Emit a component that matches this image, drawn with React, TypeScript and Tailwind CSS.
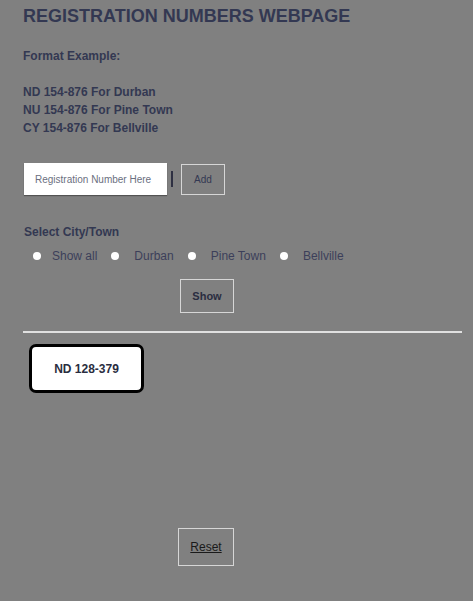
export default function App() {
  const cities = ["Show all", "Durban", "Pine Town", "Bellville"];

  return (
    <div className="min-h-[601px] w-full bg-[#808080] font-['Liberation_Sans',Arial,sans-serif] text-[#333852]">
      <div className="pl-[23px] pr-[11px] pt-[5px]">
        {/* Heading */}
        <h2 className="text-[18px] font-bold leading-[22px]">
          REGISTRATION NUMBERS WEBPAGE
        </h2>

        <p className="mt-[20px] text-[12px] font-bold leading-[18px]">Format Example:</p>

        <div className="mt-[18px] text-[12px] font-bold leading-[18px]">
          <p>ND 154-876 For Durban</p>
          <p>NU 154-876 For Pine Town</p>
          <p>CY 154-876 For Bellville</p>
        </div>

        {/* Add form */}
        <div className="mt-[26px] flex items-center">
          <input
            type="text"
            placeholder="Registration Number Here"
            className="ml-px h-[32px] w-[143px] bg-white px-[11px] text-[10px] text-[#333] placeholder:text-[#6b6f80] outline-none shadow-[0_1px_1px_rgba(0,0,0,0.35)]"
          />
          <span className="ml-[4px] h-[16px] w-[2px] bg-[#2e3042]"></span>
          <button className="ml-[8px] h-[31px] w-[44px] border border-[#d6d6d6] text-[10px] text-[#333852]">
            Add
          </button>
        </div>

        {/* City filter */}
        <p className="ml-px mt-[29px] text-[12px] font-bold leading-[16px]">Select City/Town</p>
        <div className="mt-[7px] flex items-center text-[12px] text-[#3c3f5a]">
          <label className="ml-[10px] flex items-center">
            <span className="h-[8px] w-[8px] rounded-full bg-white"></span>
            <span className="ml-[11px]">{cities[0]}</span>
          </label>
          {cities.slice(1).map((c) => (
            <label key={c} className="ml-[14px] flex items-center">
              <span className="h-[8px] w-[8px] rounded-full bg-white"></span>
              <span className="ml-[15px]">{c}</span>
            </label>
          ))}
        </div>

        <div className="mt-[14px] flex">
          <button className="ml-[157px] h-[34px] w-[54px] border border-[#d6d6d6] text-[11px] font-bold text-[#2a2d40]">
            Show
          </button>
        </div>

        <hr className="mt-[18px] border-t-[2px] border-[#e0e0e0]" />

        {/* Plates */}
        <div className="mt-[11px] flex">
          <div className="ml-[6px] flex h-[49px] w-[115px] items-center justify-center rounded-[7px] border-[3px] border-black bg-white text-[12px] font-bold text-[#2a2d40]">
            ND 128-379
          </div>
        </div>

        <div className="mt-[135px] flex">
          <button className="ml-[155px] h-[38px] w-[56px] border border-[#d6d6d6] text-[12px] text-[#1a1a1a] underline">
            Reset
          </button>
        </div>
      </div>
    </div>
  );
}
